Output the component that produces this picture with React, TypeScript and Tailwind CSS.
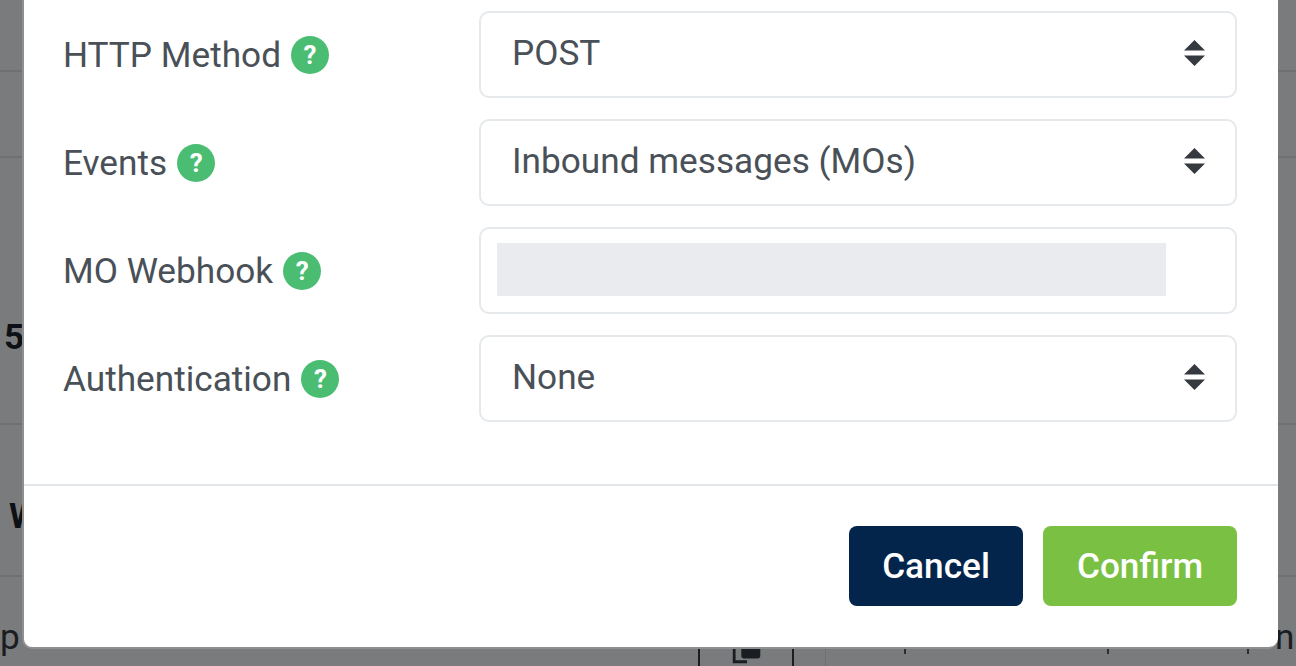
const fields = [
  { label: 'HTTP Method', value: 'POST' },
  { label: 'Events', value: 'Inbound messages (MOs)' },
  { label: 'MO Webhook', input: true },
  { label: 'Authentication', value: 'None' },
];

function SortArrows() {
  return (
    <svg viewBox="0 0 4 5" className="-mt-[3px] h-[26px] w-[21px] shrink-0 fill-[#343a40]" preserveAspectRatio="none">
      <path d="M2 0L0 2h4zm0 5L0 3h4z" />
    </svg>
  );
}

function Field({ label, value, input }: { label: string; value?: string; input?: boolean }) {
  return (
    <div className="flex h-[87px] items-center">
      <div className="mt-[2px] flex w-[416px] shrink-0 items-center gap-[10px] text-[35.2px] text-[#495057]">
        <span>{label}</span>
        <span className="flex h-[38px] w-[38px] items-center justify-center rounded-full bg-[#4abd73] text-[26px] leading-none font-bold text-white">
          ?
        </span>
      </div>
      {input ? (
        <div className="flex h-full w-[758px] items-center rounded-[10px] border-2 border-[#e6e9ec] pl-[16px]">
          <div className="-mt-[2px] h-[53px] w-[669px] bg-[#e9ebee]" />
        </div>
      ) : (
        <div className="flex h-full w-[758px] items-center justify-between rounded-[10px] border-2 border-[#e6e9ec] pr-[30px] pl-[31px] text-[35.2px] text-[#495057]">
          <span className="-mt-[2px]">{value}</span>
          <SortArrows />
        </div>
      )}
    </div>
  );
}

export default function App() {
  return (
    <div className="relative h-[666px] w-[1296px] overflow-hidden bg-[#7a7b7d] font-['Roboto',sans-serif]">
      {/* page behind the modal */}
      <div className="flex h-[72px] border-b-2 border-[#6f7072]" />
      <div className="flex h-[86px] border-b-2 border-[#6f7072]" />
      <div className="flex h-[267px] items-end border-b-2 border-[#6f7072] pb-[65px] pl-[4px] text-[35.2px] leading-[42px] font-bold text-[#0d1116]">
        5
      </div>
      <div className="h-[152px] border-b-2 border-[#6f7072] pt-[70px] pl-[9px] text-[35.2px] leading-[42px] font-bold text-[#0d1116]">
        W
      </div>
      <div className="relative h-[89px] pt-[39px] text-[35.2px] leading-[42px] text-[#1a1d21]">
        p
        <span className="absolute top-[39px] left-[1275px]">n</span>
        <div className="absolute top-[70px] left-[698px] h-[19px] w-[2px] bg-[#1a1d21]" />
        <div className="absolute top-[70px] left-[792px] h-[19px] w-[2px] bg-[#1a1d21]" />
        <div className="absolute top-[70px] left-[825px] h-[19px] w-[1px] bg-[#6f7072]" />
        <div className="absolute top-[70px] left-[904px] h-[7px] w-[2px] bg-[#2a2d31]" />
        <div className="absolute top-[70px] left-[1107px] h-[7px] w-[2px] bg-[#2a2d31]" />
        <div className="absolute top-[70px] left-[1247px] h-[7px] w-[2px] bg-[#2a2d31]" />
        <svg viewBox="0 0 30 20" className="absolute top-[70px] left-[732px] h-[19px] w-[30px] fill-[#1a1d21]">
          <path d="M9 0h20v9a3 3 0 0 1-3 3H12a3 3 0 0 1-3-3z" />
          <path d="M0 0h3v14h12v3H0z" />
        </svg>
      </div>

      {/* modal */}
      <div className="absolute top-0 left-[22px] flex h-[649px] w-[1256px] flex-col rounded-b-[10px] border-b-2 border-l-2 border-[#8e8f91] bg-white">
        <div className="flex flex-col gap-[21px] pt-[11px] pr-[39px] pb-[62px] pl-[39px]">
          {fields.map((f) => (
            <Field key={f.label} {...f} />
          ))}
        </div>
        <div className="flex justify-end gap-[20px] border-t-2 border-[#e3e6e9] pt-[40px] pr-[41px]">
          <button className="h-[80px] w-[174px] rounded-[8px] bg-[#03254c] text-[35.2px] font-medium text-white">
            Cancel
          </button>
          <button className="h-[80px] w-[194px] rounded-[8px] bg-[#7ac143] text-[35.2px] font-medium text-white">
            Confirm
          </button>
        </div>
      </div>
    </div>
  );
}
